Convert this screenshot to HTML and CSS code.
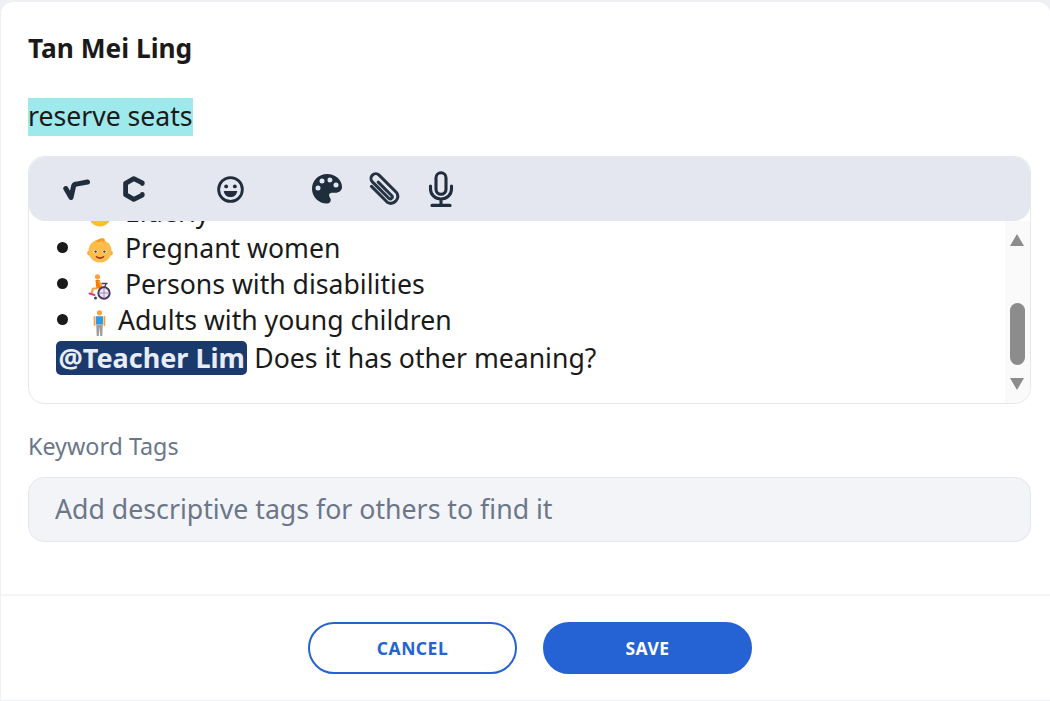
FILE: index.html
```html
<!DOCTYPE html>
<html lang="en">
<head>
<meta charset="utf-8">
<title>Edit</title>
<link rel="stylesheet" href="styles.css">
</head>
<body>
<main class="card">
  <div class="content">
    <h1 class="author">Tan Mei Ling</h1>
    <p class="title"><span class="mark">reserve seats</span></p>
    <section class="editor">
      <div class="toolbar">
        <svg class="ico i-sqrt" viewBox="0 0 27 24"><path d="M2.800 11.500L8 20.500 10.500 9.500c.4-1.500 1.300-2.200 2.800-2.400L24.500 5" fill="none" stroke="#1f2d3d" stroke-width="5" stroke-linecap="round" stroke-linejoin="round"/></svg>
        <svg class="ico i-c" viewBox="0 0 22 26"><path d="M19.300 7.500v-.6L10.800 2.600 2.600 7.300v11.400l8.200 4.700 8.500-4.300v-.6" fill="none" stroke="#1f2d3d" stroke-width="4.800" stroke-linecap="round" stroke-linejoin="round"/></svg>
        <svg class="ico i-smile" viewBox="0 0 28 28"><circle cx="14" cy="14" r="12.300" fill="none" stroke="#1f2d3d" stroke-width="2.900"/><circle cx="9.500" cy="10.800" r="2" fill="#1f2d3d"/><circle cx="18.500" cy="10.800" r="2" fill="#1f2d3d"/><path d="M7 15.500h14c-.4 3.900-3.300 6.400-7 6.400s-6.600-2.500-7-6.400z" fill="#1f2d3d"/></svg>
        <svg class="ico i-palette" viewBox="0 0 32 32"><path fill-rule="evenodd" fill="#1f2d3d" d="M16 1C7.700 1 1 7.600 1 15.700 1 23.800 7.700 30.500 16 30.500c2.400 0 3.800-1.700 3.800-3.600 0-1-.4-1.800-.9-2.500-.5-.7-.9-1.300-.9-2.100 0-1.600 1.300-2.600 2.900-2.600h3.400c3.900 0 6.700-2.400 6.700-5.800C31 6.800 24.300 1 16 1zM7 17.500a2.500 2.500 0 1 1 0-5 2.500 2.500 0 0 1 0 5zm4-7a2.500 2.500 0 1 1 0-5 2.500 2.500 0 0 1 0 5zm8-1a2.500 2.500 0 1 1 0-5 2.500 2.500 0 0 1 0 5zm6 5a2.500 2.500 0 1 1 0-5 2.500 2.500 0 0 1 0 5z"/></svg>
        <svg class="ico i-clip" viewBox="0 0 32 34"><g transform="translate(15.500 17) rotate(-45) scale(.86) translate(-14.750 -22)"><path d="M7 10v26a8 8 0 0 0 15.500 0V7a5.500 5.500 0 0 0-11 0v27a2.300 2.300 0 0 0 4.600 0V12" fill="none" stroke="#243242" stroke-width="3.500" stroke-linecap="round" stroke-linejoin="round"/></g></svg>
        <svg class="ico i-mic" viewBox="0 0 26 36"><rect x="8" y="1.800" width="10" height="21.500" rx="5" fill="none" stroke="#1f2d3d" stroke-width="3.100"/><path d="M2.500 15v3c0 5.700 4.700 10 10.500 10s10.500-4.300 10.500-10v-3M13 28v6" fill="none" stroke="#1f2d3d" stroke-width="3.100" stroke-linecap="round"/><path d="M4 34.400h18" stroke="#1f2d3d" stroke-width="3.100" stroke-linecap="round"/></svg>
      </div>
      <div class="viewport">
        <div class="body">
          <ul class="list">
            <li><svg class="emo baby" viewBox="0 0 26 27"><circle cx="13" cy="14.500" r="11" fill="#fbc02d"/></svg> Elderly</li>
            <li><svg class="emo baby" viewBox="0 0 26 27"><circle cx="2.800" cy="16" r="2.600" fill="#f5a93c"/><circle cx="23.200" cy="16" r="2.600" fill="#f5a93c"/><circle cx="13" cy="14" r="11.500" fill="#fcbd4a"/><path d="M8.500 4.500C11 2.500 14 .5 17 1.500c1.200 1 1 2.500-.5 4.500-.3-1.500-1-2.300-2.400-2.300-.7 1.800-3.500 1.600-5.600.8z" fill="#ee9c2a"/><ellipse cx="8.500" cy="14.600" rx="2" ry="1.600" fill="#fff"/><ellipse cx="17.500" cy="14.600" rx="2" ry="1.600" fill="#fff"/><circle cx="8.600" cy="14.600" r="1.200" fill="#4a342e"/><circle cx="17.400" cy="14.600" r="1.200" fill="#4a342e"/><path d="M9.500 19.800c2.300 1.700 4.700 1.700 7 0" fill="none" stroke="#a8342a" stroke-width="1.600" stroke-linecap="round"/></svg> Pregnant women</li>
            <li><svg class="emo chair" viewBox="0 0 24 26"><circle cx="9.500" cy="2.800" r="2.600" fill="#f9a23b"/><path d="M7.500 6h4.300l1.500 8.500H8.300z" fill="#f57c00"/><path d="M11 7.500l3 5.500 3.500-.5" fill="none" stroke="#f9a23b" stroke-width="1.700" stroke-linecap="round" stroke-linejoin="round"/><path d="M8.500 14.500H5l-1.500 5" fill="none" stroke="#f9a23b" stroke-width="2.200" stroke-linecap="round" stroke-linejoin="round"/><path d="M14 9.500h5" stroke="#4a3b5c" stroke-width="1.300" stroke-linecap="round"/><path d="M18 9.500l-2 6" stroke="#4a3b5c" stroke-width="1.300"/><circle cx="16" cy="19" r="5.700" fill="#eee6f2" stroke="#4a3b5c" stroke-width="1.900"/><path d="M16 14v10M11 19h10" stroke="#9d8daf" stroke-width="1"/><path d="M1.500 19.500l5 1.500" stroke="#d6408c" stroke-width="2" stroke-linecap="round"/><circle cx="7.500" cy="24" r="1.500" fill="#4a3b5c"/></svg> Persons with disabilities</li>
            <li><svg class="emo adult" viewBox="0 0 13 26"><circle cx="6.500" cy="2.800" r="2.600" fill="#f9a23b"/><path d="M3 6.300h7v8.200H3z" fill="#2e9be6"/><path d="M1.600 7v8M11.400 7v8" stroke="#f9a23b" stroke-width="1.800" stroke-linecap="round"/><path d="M3.200 14.500h6.600l-.5 11.500H7.200L6.500 17l-.7 9H3.700z" fill="#9e9e9e"/></svg>Adults with young children</li>
          </ul>
          <p class="line"><span class="mention">@Teacher Lim</span> Does it has other meaning?</p>
        </div>
        <div class="scrollbar">
          <span class="arrow up"></span>
          <span class="thumb"></span>
          <span class="arrow down"></span>
        </div>
      </div>
    </section>
    <label class="tag-label">Keyword Tags</label>
    <div class="tag-input">Add descriptive tags for others to find it</div>
  </div>
  <footer class="footer">
    <button class="btn ghost">CANCEL</button>
    <button class="btn solid">SAVE</button>
  </footer>
</main>
</body>
</html>
```

FILE: styles.css
```css
* { box-sizing: border-box; }
html, body { margin: 0; height: 100%; }
body {
  background: #eef0f4;
  padding: 2px 0 0 1px;
  font-family: "Noto Sans", sans-serif;
  color: #1a1a1a;
  overflow: hidden;
}
.card {
  height: 698px;
  background: #fff;
  border-top-left-radius: 12px;
  border-top-right-radius: 12px;
  display: flex;
  flex-direction: column;
}
.content { padding: 26px 19px 0 27px; height: 592px; flex: none; }
.author { margin: 0; font-size: 26.300px; line-height: 40px; font-weight: 700; }
.title { margin: 30px 0 0; line-height: 38px; font-size: 26.600px; }
.mark { display: block; width: max-content; background: #9ee9ec; height: 38px; line-height: 36px; }
.editor {
  margin-top: 20px;
  height: 248px;
  border: 1.500px solid #e4e7ec;
  border-radius: 16px;
  overflow: hidden;
  display: flex;
  flex-direction: column;
}
.toolbar {
  height: 64px;
  flex: none;
  background: #e4e7ef;
  border-radius: 16px;
  position: relative;
  z-index: 1;
  display: flex;
  align-items: center;
}
.ico { display: block; flex: none; }
.i-sqrt { width: 27px; height: 24px; margin-left: 34px; }
.i-c { width: 22px; height: 26px; margin-left: 33px; }
.i-smile { width: 27px; height: 27px; margin-left: 72px; }
.i-palette { width: 32px; height: 32px; margin-left: 67px; }
.i-clip { width: 32px; height: 34px; margin-left: 25px; }
.i-mic { width: 26px; height: 36px; margin-left: 28px; }
.viewport { flex: 1; display: flex; overflow: hidden; min-height: 0; }
.body { flex: 1; overflow: hidden; font-size: 26.600px; line-height: 36px; min-width: 0; }
.list { list-style: disc; margin: -28px 0 0; padding: 0 0 0 56px; }
.list li { height: 36px; white-space: nowrap; }
.list li::marker { font-size: 30px; }
.emo { vertical-align: -6px; }
.baby { width: 26px; height: 27px; margin: 0 5px 0 2px; }
.chair { width: 24px; height: 26px; margin: 0 6px 0 3px; }
.adult { width: 13px; height: 26px; margin: 0 12px 0 8px; }
.line { margin: 3px 0 0 27px; white-space: nowrap; line-height: 36px; }
.mention {
  display: inline-block;
  background: #1a3a6e;
  color: #e8edf5;
  font-weight: 700;
  font-size: 27px;
  border-radius: 5px;
  padding: 0 2.500px;
  height: 34px;
  line-height: 34px;
}
.scrollbar {
  width: 25.500px;
  flex: none;
  background: #fafafa;
  position: relative;
}
.arrow { position: absolute; left: 5px; width: 0; height: 0; border-left: 7.500px solid transparent; border-right: 7.500px solid transparent; }
.arrow.up { top: 13px; border-bottom: 12px solid #8c8c8c; }
.arrow.down { top: 157px; border-top: 12px solid #8c8c8c; }
.thumb { position: absolute; left: 5px; top: 82px; width: 15px; height: 62px; border-radius: 8px; background: #8c8c8c; }
.tag-label { display: block; margin-top: 24px; font-size: 23.300px; line-height: 36px; color: #6b7789; }
.tag-input {
  margin-top: 13px;
  height: 65px;
  background: #f3f4f8;
  border: 1.500px solid #e4e7ec;
  border-radius: 16px;
  padding: 0 26px;
  font-size: 26.700px;
  line-height: 62px;
  color: #6b7789;
}
.footer {
  flex: 1;
  border-top: 2px solid #f3f4f8;
  display: flex;
  justify-content: center;
  align-items: center;
  gap: 26px;
  padding: 0 0 1px 9px;
}
.btn {
  width: 209px;
  height: 52px;
  border-radius: 27px;
  font-family: "Noto Sans", sans-serif;
  font-size: 17.500px;
  font-weight: 700;
  letter-spacing: .5px;
  border: 2px solid #2563d4;
}
.ghost { background: #fff; color: #2563d4; }
.solid { background: #2563d4; color: #fff; }
```
